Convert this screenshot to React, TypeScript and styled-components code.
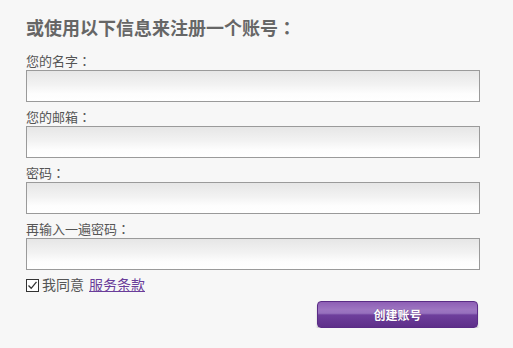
import React from "react";
import styled, { createGlobalStyle } from "styled-components";

const Global = createGlobalStyle`
  html, body { margin: 0; padding: 0; background: #f7f7f7; }
  body { font-family: "Liberation Sans", "Noto Sans CJK SC", sans-serif; }
`;

const Page = styled.div`
  padding: 17px 0 0 26px;
  width: 454px;
`;

const Heading = styled.h2`
  margin: 0 0 13px;
  height: 24px;
  font-size: 18px;
  line-height: 24px;
  font-weight: bold;
  color: #666;
`;

const Colon = styled.span`
  font-family: "Noto Sans CJK JP", "Noto Sans CJK SC", sans-serif;
  line-height: 0;
`;

const Field = styled.div`
  display: flex;
  flex-direction: column;
  margin-bottom: 8px;
`;

const Label = styled.label`
  display: block;
  height: 16px;
  font-size: 13px;
  line-height: 16px;
  color: #555;
`;

const Input = styled.input`
  box-sizing: border-box;
  width: 454px;
  height: 32px;
  margin: 0;
  border: 1px solid #9a9a9a;
  border-radius: 0;
  background: linear-gradient(to bottom, #e6e6e6 0%, #f2f2f2 45%, #fdfdfd 75%, #ffffff 100%);
  outline: none;
  padding: 0 6px;
  font-size: 13px;
`;

const AgreeRow = styled.div`
  display: flex;
  align-items: center;
  gap: 3px;
  height: 16px;
  margin-top: -1px;
  font-size: 14px;
  line-height: 16px;
  color: #555;
`;

const CheckBox = styled.span`
  box-sizing: border-box;
  width: 13px;
  height: 13px;
  border: 1px solid #333;
  background: #fff;
  display: inline-flex;
  align-items: center;
  justify-content: center;
`;

const Terms = styled.a`
  color: #6a3d9a;
  text-decoration: underline;
  margin-left: 2px;
`;

const Actions = styled.div`
  display: flex;
  justify-content: flex-end;
  margin-top: 8px;
  padding-right: 2px;
`;

const Button = styled.button`
  width: 161px;
  height: 27px;
  border: 1px solid #5a2c86;
  border-radius: 4px;
  color: #fff;
  font-family: "Liberation Sans", "Noto Sans CJK SC", sans-serif;
  font-size: 12px;
  font-weight: bold;
  text-shadow: 0 0 1px rgba(60, 20, 90, 0.6);
  background: linear-gradient(to bottom, #8e5fb5 0%, #9d75c1 30%, #9670bd 45%, #6e3f9c 52%, #5e2f8a 100%);
  box-shadow: 0 3px 2px rgba(0, 0, 0, 0.18);
  cursor: pointer;
`;

const fields = ["您的名字", "您的邮箱", "密码", "再输入一遍密码"];

export default function App() {
  return (
    <>
      <Global />
      <Page>
        <Heading>
          或使用以下信息来注册一个账号<Colon>：</Colon>
        </Heading>
        {fields.map((f, i) => (
          <Field key={i}>
            <Label>
              {f}
              <Colon>：</Colon>
            </Label>
            <Input type={i >= 2 ? "password" : "text"} />
          </Field>
        ))}
        <AgreeRow>
          <CheckBox>
            <svg width="11" height="11" viewBox="0 0 11 11">
              <path d="M1.5 5.5 L4.2 8.3 L9.5 1.8" fill="none" stroke="#333" strokeWidth="1.3" />
            </svg>
          </CheckBox>
          <span>我同意</span>
          <Terms href="#">服务条款</Terms>
        </AgreeRow>
        <Actions>
          <Button>创建账号</Button>
        </Actions>
      </Page>
    </>
  );
}
